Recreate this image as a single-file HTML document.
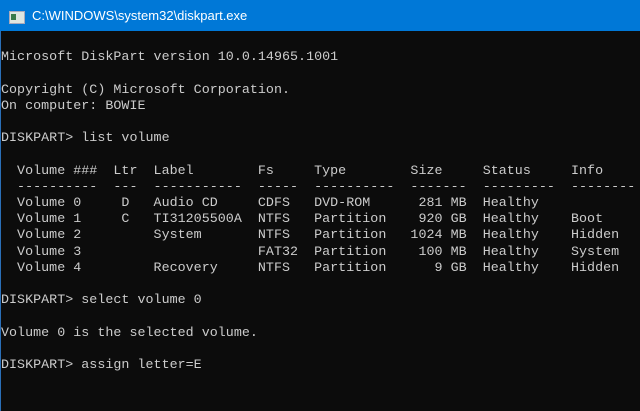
<!DOCTYPE html>
<html><head><style>
body{margin:0;width:640px;height:411px;overflow:hidden;background:#0c0c0c}
.t{position:absolute;left:0;top:0;width:640px;height:31px;background:#0078d7}
.t span{position:absolute;left:32px;top:8px;color:#fff;font:13px "Liberation Sans",sans-serif}
.ic{position:absolute;left:9px;top:11px;width:14px;height:11px;background:#dfe6e0;border:1px solid #aab}
.ic:before{content:"";position:absolute;left:1px;top:2px;width:5px;height:6px;background:#3a7a4a}
pre{position:absolute;left:1px;top:34px;margin:0;color:#cccccc;font:13.33px/16.2px "Liberation Mono",monospace;letter-spacing:0.03px;white-space:pre}
.lb{position:absolute;left:0;top:31px;width:1px;height:380px;background:#2a6fb8}
</style></head><body>
<div class="t"><div class="ic"></div><span>C:\WINDOWS\system32\diskpart.exe</span></div>
<pre>

Microsoft DiskPart version 10.0.14965.1001

Copyright (C) Microsoft Corporation.
On computer: BOWIE

DISKPART&gt; list volume

  Volume ###  Ltr  Label        Fs     Type        Size     Status     Info
  ----------  ---  -----------  -----  ----------  -------  ---------  --------
  Volume 0     D   Audio CD     CDFS   DVD-ROM      281 MB  Healthy
  Volume 1     C   TI31205500A  NTFS   Partition    920 GB  Healthy    Boot
  Volume 2         System       NTFS   Partition   1024 MB  Healthy    Hidden
  Volume 3                      FAT32  Partition    100 MB  Healthy    System
  Volume 4         Recovery     NTFS   Partition      9 GB  Healthy    Hidden

DISKPART&gt; select volume 0

Volume 0 is the selected volume.

DISKPART&gt; assign letter=E
</pre>
<div class="lb"></div>
</body></html>
